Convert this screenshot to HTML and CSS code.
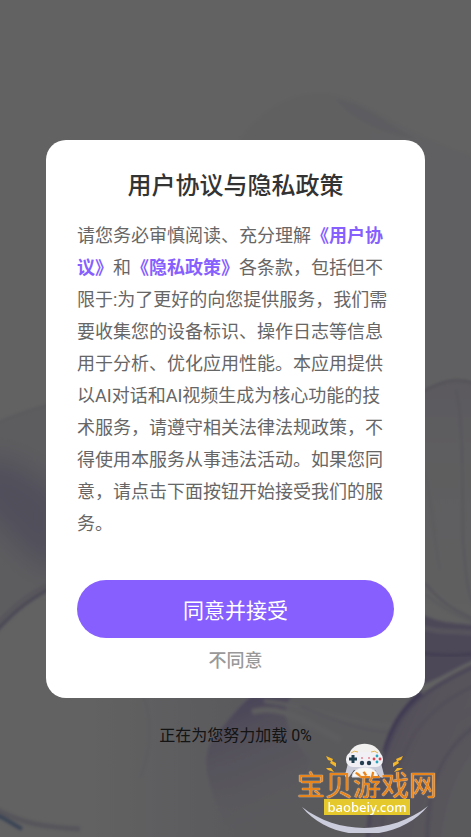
FILE: index.html
```html
<!DOCTYPE html>
<html lang="zh-CN">
<head>
    <meta charset="UTF-8">
    <meta name="viewport" content="width=device-width, initial-scale=1.0">
    <title>用户协议与隐私政策</title>
    <link rel="stylesheet" href="styles.css">
</head>
<body>
    <main class="splash">
        <svg class="splash-bg" viewBox="0 0 471 837" preserveAspectRatio="none" aria-hidden="true">
            <defs>
                <filter id="soft" x="-40%" y="-40%" width="180%" height="180%"><feGaussianBlur stdDeviation="14"/></filter>
                <filter id="line" x="-30%" y="-30%" width="160%" height="160%"><feGaussianBlur stdDeviation="1.5"/></filter>
                <linearGradient id="bubble" x1="0" y1="0" x2="1" y2="1">
                    <stop offset="0" stop-color="#f1f1f3"/>
                    <stop offset="1" stop-color="#f0f0f4"/>
                </linearGradient>
                <linearGradient id="petal" x1="0" y1="0" x2="0" y2="1">
                    <stop offset="0" stop-color="#e4e0ec"/>
                    <stop offset="0.3" stop-color="#ebe9ee"/>
                    <stop offset="1" stop-color="#f0f0f2"/>
                </linearGradient>
                <linearGradient id="shade" x1="0" y1="0" x2="0.3" y2="1">
                    <stop offset="0" stop-color="#a595d8"/>
                    <stop offset="0.35" stop-color="#cdc4e2"/>
                    <stop offset="1" stop-color="#e0dde6" stop-opacity="0"/>
                </linearGradient>
                <linearGradient id="ground" x1="0" y1="0" x2="1" y2="0">
                    <stop offset="0.2" stop-color="#e2e0e8" stop-opacity="0"/>
                    <stop offset="0.5" stop-color="#e2e0e8"/>
                </linearGradient>
                <linearGradient id="fold" x1="0" y1="0" x2="1" y2="0.7">
                    <stop offset="0" stop-color="#b9acd9"/>
                    <stop offset="0.5" stop-color="#dad0e4"/>
                    <stop offset="1" stop-color="#dcd8e4"/>
                </linearGradient>
            </defs>
            <rect width="471" height="837" fill="#f4f4f5"/>

            <!-- upper bubble -->
            <path d="M236 145C258 110 290 93 320 93C365 94 400 134 471 155V400H236Z" fill="url(#bubble)" filter="url(#line)"/>
            <path d="M335 99C372 104 385 125 418 139C390 137 352 122 335 99Z" fill="#e8e7f0" filter="url(#line)"/>

            <!-- left wave -->
            <path d="M-5 424C20 413 35 408 60 402V580C36 594 18 607 -5 635Z" fill="#e9e8ee" filter="url(#line)"/>
            <path d="M-25 460C10 450 42 480 65 500V570C30 575 5 520 -25 505Z" fill="#c9c4e2" filter="url(#soft)"/>
            <g fill="none" filter="url(#line)">
                <path d="M-5 424C20 413 35 408 60 402" stroke="#dedce8" stroke-width="2"/>
                <path d="M-5 632C17 608 32 597 60 583" stroke="#bdb6d4" stroke-width="4"/>
                <path d="M-5 625C17 601 32 591 60 578" stroke="#d3cddf" stroke-width="2"/>
                <path d="M-5 809C24 824 43 827 80 829" stroke="#d6d4e2" stroke-width="5"/>
                <path d="M-5 814C7 819 12 824 22 829" stroke="#8fa8d3" stroke-width="4"/>
            </g>

            <!-- right petal -->
            <path d="M420 393C442 382 456 376 476 384V640H420Z" fill="url(#petal)" filter="url(#line)"/>
            <g fill="none" stroke-width="2" filter="url(#line)">
                <path d="M422 392C440 382 456 376 476 384" stroke="#cac4d5"/>
                <path d="M456 390C464 423 462 490 463 540C466 580 469 602 476 608" stroke="#d8d5e3"/>
                <path d="M425 470C434 515 433 535 440 570" stroke="#e2dfe7"/>
                <path d="M425 583C439 600 452 610 476 620" stroke="#d0cbdc"/>
                <path d="M425 594C443 608 455 615 476 623" stroke="#dcd8e4"/>
            </g>
            <path d="M418 612C440 625 455 622 480 626V657C450 670 438 680 418 686Z" fill="#bfb3da" filter="url(#line)"/>
            <path d="M418 652C440 657 458 656 480 653" fill="none" stroke="#a296c8" stroke-width="3" filter="url(#line)"/>
            <path d="M418 626C440 634 455 630 480 634" fill="none" stroke="#d9d1e7" stroke-width="5" filter="url(#line)"/>

            <!-- lower folds -->
            <rect y="690" width="471" height="147" fill="url(#ground)"/>
            <path d="M140 690C154 715 152 748 140 778" fill="none" stroke="#e6e4ea" stroke-width="3" filter="url(#line)"/>
            <path d="M215 737C230 718 240 704 260 690H300C275 705 285 730 310 760L290 837H230C215 800 195 760 215 737Z" fill="url(#shade)" filter="url(#line)"/>
            <g fill="none" filter="url(#line)">
                <path d="M252 712C275 706 290 712 340 740" stroke="#e9e7ed" stroke-width="6"/>
                <path d="M264 701C300 704 340 722 392 726" stroke="#e6e4eb" stroke-width="4"/>
                <path d="M300 706C330 718 355 730 390 733" stroke="#d7d3df" stroke-width="2"/>
            </g>
            <path d="M480 660C428 683 397 715 386 746C377 777 365 805 366 845H440C446 800 455 770 480 745Z" fill="url(#fold)" filter="url(#line)"/>
            <g fill="none" filter="url(#line)">
                <path d="M421 693C400 712 391 730 385 752" stroke="#9a8acb" stroke-width="5"/>
                <path d="M480 664C437 684 410 700 396 728C382 758 372 785 367 845" stroke="#b9add6" stroke-width="3"/>
                <path d="M480 683C441 700 417 722 404 754C390 780 382 799 381 845" stroke="#cdc2dc" stroke-width="3"/>
                <path d="M480 706C445 722 423 744 414 778C409 800 407 818 408 845" stroke="#ddd2e3" stroke-width="6"/>
                <path d="M480 722C450 744 436 766 430 802C428 819 427 827 427 845" stroke="#c6bedb" stroke-width="3"/>
            </g>
        </svg>
        <p class="loading">正在为您努力加载 0%</p>
    </main>

    <div class="overlay">
        <section class="dialog" role="dialog" aria-modal="true" aria-labelledby="dialog-title">
            <h1 class="dialog-title" id="dialog-title">用户协议与隐私政策</h1>
            <p class="dialog-text">请您务必审慎阅读、充分理解<a class="link" href="#">《用户协议》</a>和<a class="link" href="#">《隐私政策》</a>各条款，包括但不限于:为了更好的向您提供服务，我们需要收集您的设备标识、操作日志等信息用于分析、优化应用性能。本应用提供以AI对话和AI视频生成为核心功能的技术服务，请遵守相关法律法规政策，不得使用本服务从事违法活动。如果您同意，请点击下面按钮开始接受我们的服务。</p>
            <button class="btn-accept" type="button">同意并接受</button>
            <button class="btn-refuse" type="button">不同意</button>
        </section>
    </div>

    <div class="watermark">
        <svg class="watermark-art" viewBox="0 0 144 92" aria-hidden="true">
            <!-- smile -->
            <path d="M7 66C43 94 96 94 133 65C104 101 38 104 7 66Z" fill="#cbccdc"/>
            <!-- controller -->
            <path d="M54 14C57 -1 82 -1 86 14L84 28H56Z" fill="#f1f0ee"/>
            <path d="M53 22L50 34Q50 38 54 36L59 29H80L85 36Q89 38 89 34L86 22Z" fill="#c9cbd9"/>
            <rect x="51" y="11" width="37" height="15" rx="7" fill="#f0f0f5"/>
            <path d="M56 12Q59 9 63 11M76 11Q80 9 83 12" fill="none" stroke="#e4b64b" stroke-width="1"/>
            <path d="M58 14V22M54 18H62" stroke="#1e4051" stroke-width="3"/>
            <circle cx="67" cy="22" r="2.2" fill="#263f50"/>
            <circle cx="74" cy="22" r="2.2" fill="#263f50"/>
            <path d="M66 17H68M73 17H75" stroke="#df4f62" stroke-width="1"/>
            <circle cx="82" cy="15" r="1.4" fill="#27a6bd"/>
            <circle cx="79" cy="18" r="1.4" fill="#e34250"/>
            <circle cx="85" cy="18" r="1.4" fill="#e34250"/>
            <circle cx="82" cy="21" r="1.4" fill="#27a6bd"/>
            <path d="M57 36Q58 27 70 26Q82 27 83 36Z" fill="#f8f8f5" stroke="#dcdde6" stroke-width="1"/>
            <!-- sparks -->
            <path d="M31 15L38 18L37 20L41 22L41 26L35 22L36 20L33 19ZM108 15L101 18L102 20L98 22L98 26L104 22L103 20L106 19ZM31 27L36 27L39 31L33 29ZM108 27L102 27L99 31L105 29Z" fill="#f2b52b"/>
        </svg>
        <div class="watermark-name">宝贝游戏网</div>
        <div class="watermark-url">baobeiy.com</div>
    </div>
</body>
</html>
```
FILE: styles.css
```css
* {
    box-sizing: border-box;
}

body {
    margin: 0;
    font-family: Roboto, "Noto Sans CJK SC", sans-serif;
    color: #333;
}

.splash {
    position: relative;
    display: flex;
    flex-direction: column;
    justify-content: flex-end;
    align-items: center;
    min-height: 100vh;
    padding-bottom: 89px;
}

.splash-bg {
    position: absolute;
    top: 0;
    left: 0;
    width: 100%;
    height: 100%;
}

.loading {
    position: relative;
    margin: 0;
    font-size: 16px;
    line-height: 24px;
}

.overlay {
    position: fixed;
    top: 0;
    right: 0;
    bottom: 0;
    left: 0;
    display: flex;
    justify-content: center;
    align-items: center;
    padding: 0 46px;
    background-color: rgba(0, 0, 0, 0.6);
}

.dialog {
    display: flex;
    flex-direction: column;
    width: 100%;
    max-width: 420px;
    padding: 28px 31px 25px;
    border-radius: 20px;
    background-color: white;
}

.dialog-title {
    margin: 0 0 16px;
    font-size: 24px;
    font-weight: 500;
    line-height: 36px;
    text-align: center;
}

.dialog-text {
    margin: 0 0 40px;
    color: #666;
    font-size: 18px;
    line-height: 32px;
}

.link {
    color: #875fff;
    font-weight: 600;
    text-decoration: none;
}

.btn-accept,
.btn-refuse {
    border: none;
    padding: 0;
    font-family: inherit;
    cursor: pointer;
}

.btn-accept {
    height: 58px;
    margin-bottom: 11px;
    border-radius: 29px;
    background-color: #875fff;
    color: white;
    font-size: 21px;
}

.btn-refuse {
    align-self: center;
    background: none;
    color: #999;
    font-size: 18px;
    font-weight: 500;
    line-height: 24px;
}

/* Site watermark in the corner */
.watermark {
    position: fixed;
    right: 32px;
    bottom: 4px;
    display: flex;
    flex-direction: column;
    align-items: center;
    justify-content: flex-end;
    width: 144px;
    height: 92px;
    padding-bottom: 18px;
}

.watermark-art {
    position: absolute;
    top: 0;
    left: 0;
    width: 100%;
    height: 100%;
}

.watermark-name {
    position: relative;
    color: #e8851c;
    font-family: "Noto Sans CJK SC", sans-serif;
    font-size: 28px;
    line-height: 30px;
    white-space: nowrap;
    text-shadow: 0 0 1px #f8d9b8, 0 0 1px #f8d9b8;
}

.watermark-url {
    position: relative;
    width: 86px;
    background-color: #e5c92c;
    color: white;
    font-family: "Noto Sans", sans-serif;
    font-size: 13px;
    font-weight: 500;
    line-height: 16px;
    text-align: center;
}
```
